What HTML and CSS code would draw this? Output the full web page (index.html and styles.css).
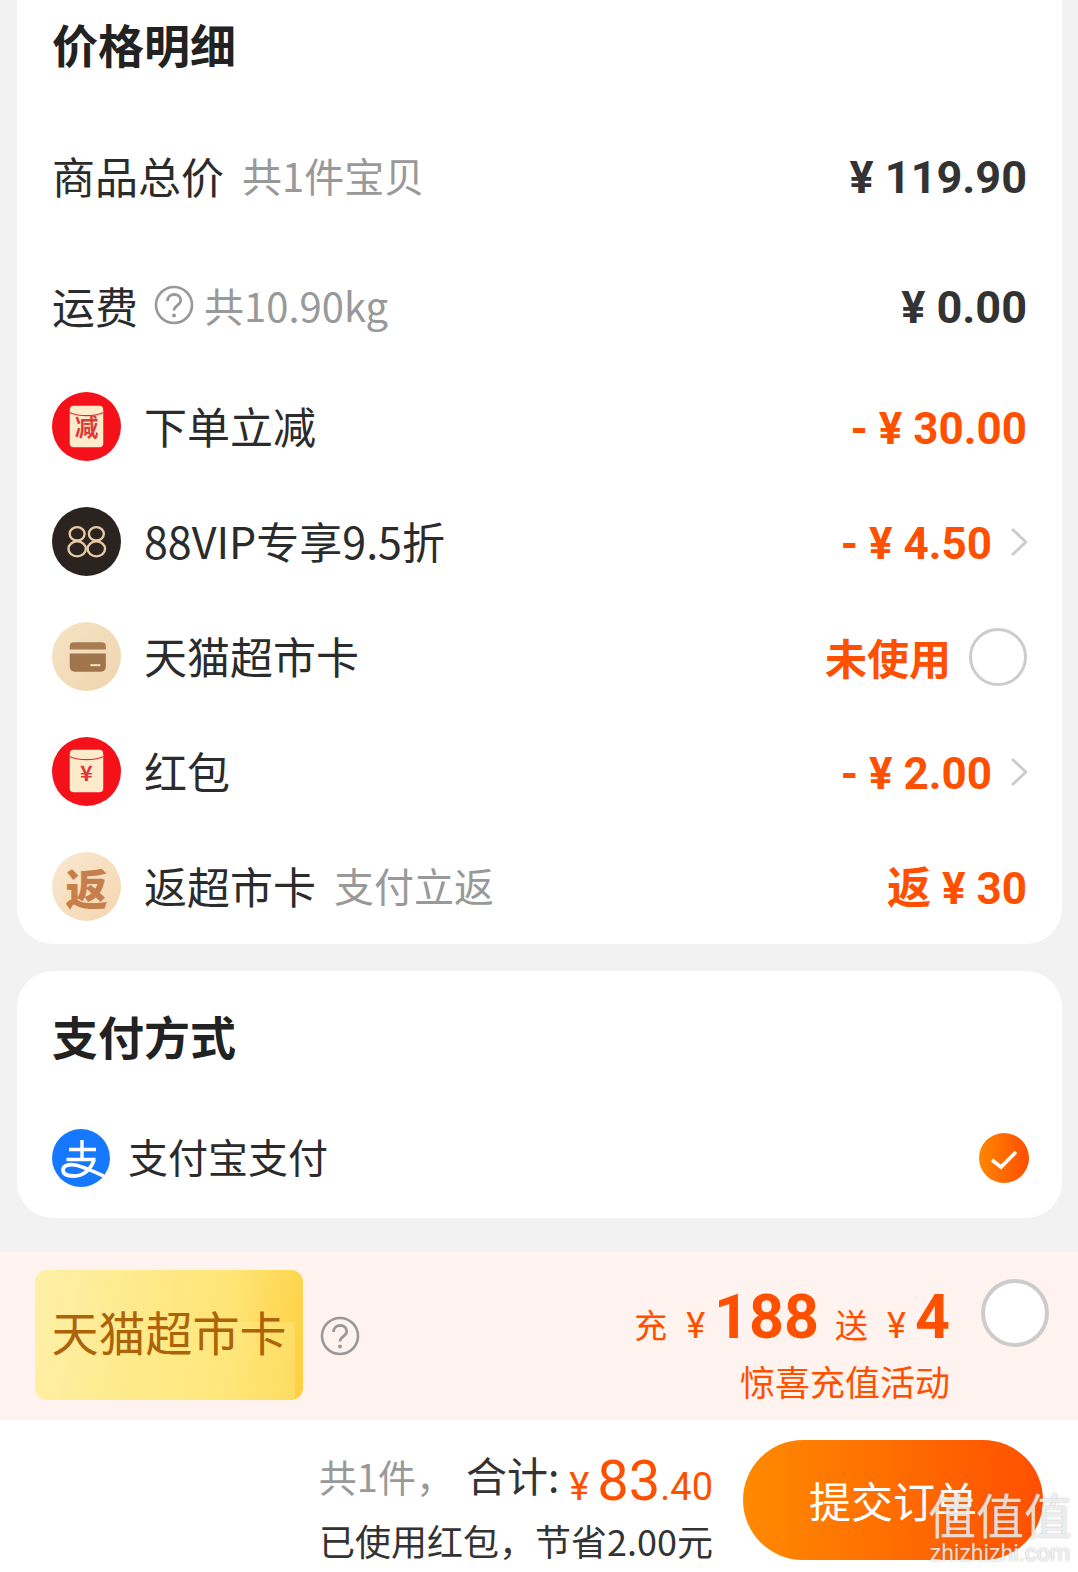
FILE: index.html
```html
<!DOCTYPE html>
<html lang="zh-CN">
<head>
    <meta charset="UTF-8" />
    <title>确认订单</title>
    <link rel="stylesheet" href="styles.css">
</head>
<body>
    <main class="page">
        <section class="card price-card">
            <h2 class="card-title price-title">价格明细</h2>
            <div class="row row-plain">
                <span class="label">商品总价</span>
                <span class="hint hint-gap">共1件宝贝</span>
                <span class="amount dark">¥ 119.90</span>
            </div>
            <div class="row row-plain row-second">
                <span class="label">运费</span>
                <svg class="help" viewBox="0 0 40 40">
                    <circle cx="20" cy="20" r="18" fill="none" stroke="#999" stroke-width="2.6"/>
                    <path d="M13.500 16c0-4 3-6.500 6.700-6.500s6.500 2.400 6.500 5.800c0 5-6.700 5.200-6.700 10.200" fill="none" stroke="#999" stroke-width="2.800"/>
                    <circle cx="20" cy="30.500" r="2" fill="#999"/>
                </svg>
                <span class="hint">共10.90kg</span>
                <span class="amount dark">¥ 0.00</span>
            </div>
            <div class="row">
                <svg class="row-icon" viewBox="0 0 70 70">
                    <circle cx="35" cy="35" r="35" fill="#f5111a"/>
                    <rect x="18" y="14" width="34" height="42" rx="4" fill="#fdebcb"/>
                    <path d="M18 21c10 4 24 4 34 0" fill="none" stroke="#e02a2a" stroke-width="1.200"/>
                    <text x="35" y="45" class="icon-char">减</text>
                </svg>
                <span class="label">下单立减</span>
                <span class="amount orange">- ¥ 30.00</span>
            </div>
            <div class="row">
                <svg class="row-icon" viewBox="0 0 70 70">
                    <circle cx="35" cy="35" r="35" fill="#2a2320"/>
                    <g fill="none" stroke="#e8cba5" stroke-width="2.400">
                        <ellipse cx="25.500" cy="27.200" rx="7.600" ry="6.800"/>
                        <ellipse cx="25.500" cy="42.500" rx="8.800" ry="7.600"/>
                        <ellipse cx="45" cy="27.200" rx="7.600" ry="6.800"/>
                        <ellipse cx="45" cy="42.500" rx="8.800" ry="7.600"/>
                    </g>
                </svg>
                <span class="label">88VIP专享9.5折</span>
                <span class="amount orange">- ¥ 4.50</span>
                <svg class="chevron" viewBox="0 0 18 30"><path d="M3 2l14 13L3 28" fill="none" stroke="#ccc" stroke-width="3"/></svg>
            </div>
            <div class="row">
                <svg class="row-icon" viewBox="0 0 70 70">
                    <defs>
                        <linearGradient id="beige" x1="0" y1="0" x2="1" y2="1">
                            <stop offset="0" stop-color="#f6e4c6"/>
                            <stop offset="1" stop-color="#efd4ac"/>
                        </linearGradient>
                    </defs>
                    <circle cx="35" cy="35" r="35" fill="url(#beige)"/>
                    <path d="M18 28v-3.500a4 4 0 0 1 4-4h28.600a4 4 0 0 1 4 4V28z" fill="#a87c52"/>
                    <path d="M18 32h36.600v13.500a5 5 0 0 1-5 5H23a5 5 0 0 1-5-5z" fill="#a0744c"/>
                    <rect x="39" y="42.800" width="10" height="2" fill="#f6e4c6"/>
                </svg>
                <span class="label">天猫超市卡</span>
                <span class="status">未使用</span>
                <span class="radio radio-small"></span>
            </div>
            <div class="row">
                <svg class="row-icon" viewBox="0 0 70 70">
                    <circle cx="35" cy="35" r="35" fill="#f5111a"/>
                    <rect x="18" y="13" width="34" height="43" rx="4" fill="#fdebcb"/>
                    <path d="M18 20c10 4 24 4 34 0" fill="none" stroke="#e02a2a" stroke-width="1.200"/>
                    <text x="35" y="45" class="icon-char icon-yen">¥</text>
                </svg>
                <span class="label">红包</span>
                <span class="amount orange">- ¥ 2.00</span>
                <svg class="chevron" viewBox="0 0 18 30"><path d="M3 2l14 13L3 28" fill="none" stroke="#ccc" stroke-width="3"/></svg>
            </div>
            <div class="row">
                <span class="fan-icon">返</span>
                <span class="label">返超市卡</span>
                <span class="hint hint-gap">支付立返</span>
                <span class="amount amount-fan orange">返 ¥ 30</span>
            </div>
        </section>

        <section class="card pay-card">
            <h2 class="card-title">支付方式</h2>
            <div class="pay-row">
                <svg class="alipay" viewBox="0 0 58 58">
                    <defs>
                        <clipPath id="payclip"><circle cx="29" cy="29" r="29"/></clipPath>
                    </defs>
                    <circle cx="29" cy="29" r="29" fill="#1677ff"/>
                    <g clip-path="url(#payclip)" fill="none" stroke="#fff">
                        <path d="M17 20.500h27M30 11v19M14.500 30.500h29" stroke-width="3.400"/>
                        <path d="M42 31C39 40 32 47 22 47c-7 0-11-2-11-6 0-5 7-6 12-5 10 2 22 8 35 14" stroke-width="3.800"/>
                    </g>
                </svg>
                <span class="label pay-label">支付宝支付</span>
                <svg class="check" viewBox="0 0 50 50">
                    <defs>
                        <linearGradient id="checkfill" x1="0" y1="0" x2="1" y2="0">
                            <stop offset="0" stop-color="#ff8500"/>
                            <stop offset="1" stop-color="#ff4f00"/>
                        </linearGradient>
                    </defs>
                    <circle cx="25" cy="25" r="25" fill="url(#checkfill)"/>
                    <path d="M13 27l9 7 15-15" fill="none" stroke="#fff" stroke-width="3.600"/>
                </svg>
            </div>
        </section>

        <section class="promo">
            <div class="promo-card">天猫超市卡</div>
            <svg class="help help-promo" viewBox="0 0 40 40">
                <circle cx="20" cy="20" r="18" fill="none" stroke="#999" stroke-width="2.600"/>
                <path d="M13.500 16c0-4 3-6.500 6.700-6.500s6.500 2.400 6.500 5.800c0 5-6.700 5.200-6.700 10.200" fill="none" stroke="#999" stroke-width="2.800"/>
                <circle cx="20" cy="30.500" r="2" fill="#999"/>
            </svg>
            <div class="promo-info">
                <div class="promo-line">
                    <span class="promo-small">充</span>
                    <span class="promo-yen">¥</span>
                    <span class="promo-num">188</span>
                    <span class="promo-small">送</span>
                    <span class="promo-yen">¥</span>
                    <span class="promo-num">4</span>
                </div>
                <div class="promo-note">惊喜充值活动</div>
            </div>
            <span class="radio radio-big"></span>
        </section>

        <footer class="bottom-bar">
            <div class="totals">
                <div class="total-line">
                    <div class="total-words">
                        <span class="total-count">共1件，</span>
                        <span class="total-label">合计:</span>
                    </div>
                    <div class="total-price">
                        <span class="total-yen">¥</span>
                        <span class="total-int">83</span>
                        <span class="total-dec">.40</span>
                    </div>
                </div>
                <div class="saved">已使用红包，节省2.00元</div>
            </div>
            <div class="submit">提交订单</div>
        </footer>
        <div class="watermark">
            <div class="wm-mark">值值值</div>
            <div class="wm-site">zhizhizhi.com</div>
        </div>
    </main>
</body>
</html>
```

FILE: styles.css
```css
* {
    box-sizing: border-box;
}
html, body {
    margin: 0;
    padding: 0;
}
body {
    width: 1078px;
    height: 1572px;
    overflow: hidden;
    background-color: #f2f2f3;
    font-family: "Noto Sans CJK SC", "Noto Sans", sans-serif;
    color: #333;
}
.page {
    position: relative;
    height: 1572px;
    display: flex;
    flex-direction: column;
}
.card {
    background-color: #fff;
    margin: 0 16px 0 17px;
    padding: 0 35px;
}
.price-card {
    height: 944px;
    border-radius: 0 0 36px 36px;
}
.pay-card {
    height: 247px;
    margin-top: 27px;
    padding-top: 19px;
    border-radius: 36px;
}
.card-title {
    margin: 0;
    font-size: 46px;
    font-weight: 700;
    line-height: 90px;
    color: #222;
}
.price-title {
    line-height: 86px;
    margin-bottom: 24px;
}
.row {
    display: flex;
    align-items: center;
    height: 115px;
}
.row-plain {
    height: 130px;
}
.row-second {
    margin-bottom: -1px;
}
.row-icon {
    width: 69px;
    height: 69px;
    margin-right: 23px;
    flex-shrink: 0;
}
.icon-char {
    font-size: 24px;
    font-weight: 700;
    fill: #e0383a;
    text-anchor: middle;
}
.icon-yen {
    font-size: 22px;
}
.fan-icon {
    width: 69px;
    height: 69px;
    margin-right: 23px;
    flex-shrink: 0;
    border-radius: 50%;
    background: linear-gradient(135deg, #f9e8d2, #f5d6ae);
    color: #c67f4a;
    font-size: 42px;
    font-weight: 900;
    line-height: 69px;
    text-align: center;
}
.label {
    font-size: 43px;
    line-height: 60px;
    margin-top: -4px;
    color: #2b2b2b;
}
.hint {
    font-size: 40px;
    line-height: 60px;
    margin-top: -4px;
    color: #999;
}
.row-plain .label,
.row-plain .hint {
    margin-top: 0;
}
.hint-gap {
    margin-left: 18px;
}
.help {
    width: 40px;
    height: 40px;
    margin: 0 10px 0 16px;
}
.amount {
    margin-left: auto;
    margin-top: 4px;
    font-family: "Roboto", "Noto Sans CJK SC", sans-serif;
    font-size: 44px;
    font-weight: 700;
    white-space: pre;
}
.amount-fan {
    margin-top: -4px;
}
.dark {
    font-size: 45px;
    color: #333;
}
.orange {
    color: #ff5000;
}
.chevron {
    width: 18px;
    height: 30px;
    margin-left: 17px;
}
.status {
    margin-left: auto;
    font-size: 42px;
    font-weight: 700;
    color: #ff5000;
}
.radio {
    display: block;
    border-radius: 50%;
    border: 3px solid #ccc;
    background-color: #fff;
    flex-shrink: 0;
}
.radio-small {
    width: 58px;
    height: 58px;
    margin-left: 18px;
}
.radio-big {
    width: 68px;
    height: 68px;
    margin: 27px 29px 0 31px;
    border-width: 4px;
}
.pay-row {
    display: flex;
    align-items: center;
    margin-top: 49px;
}
.alipay {
    width: 58px;
    height: 58px;
    margin-right: 18px;
}
.pay-label {
    font-size: 40px;
}
.check {
    width: 50px;
    height: 50px;
    margin-left: auto;
    margin-right: -2px;
}
.promo {
    display: flex;
    align-items: flex-start;
    margin-top: 34px;
    height: 168px;
    background-color: #fef3ef;
    padding-left: 35px;
}
.promo-card {
    width: 268px;
    height: 130px;
    margin-top: 18px;
    border-radius: 12px;
    background: linear-gradient(#ffec8a66, #ffec8a66) 80px 52px / 180px 78px no-repeat,
        linear-gradient(100deg, #fdf0a8 0%, #ffe474 70%, #fdcf40 100%);
    color: #ad6408;
    font-size: 47px;
    line-height: 122px;
    text-align: center;
}
.help-promo {
    margin: 64px 0 0 17px;
}
.promo-info {
    margin-left: auto;
    padding-top: 29px;
    text-align: right;
    color: #ff5000;
}
.promo-line {
    display: flex;
    align-items: baseline;
    justify-content: flex-end;
    height: 76px;
}
.promo-small {
    font-size: 33px;
    margin-left: 16px;
}
.promo-yen {
    font-family: "Roboto", sans-serif;
    font-size: 36px;
    margin: 0 9px 0 19px;
}
.promo-num {
    font-family: "Roboto", sans-serif;
    font-size: 61px;
    font-weight: 700;
}
.promo-note {
    font-size: 35px;
    line-height: 48px;
}
.bottom-bar {
    flex: 1;
    display: flex;
    align-items: flex-start;
    justify-content: flex-end;
    background-color: #fff;
    padding-top: 20px;
}
.totals {
    width: 400px;
    margin-right: 30px;
    text-align: right;
}
.total-line {
    display: flex;
    align-items: flex-start;
    justify-content: flex-end;
    height: 76px;
    white-space: nowrap;
}
.total-words {
    display: flex;
    align-items: baseline;
    line-height: 68px;
}
.total-price {
    display: flex;
    align-items: baseline;
    padding-top: 8px;
}
.total-count {
    font-size: 38px;
    color: #999;
    margin-right: 12px;
}
.total-label {
    font-size: 41px;
    color: #333;
}
.total-yen {
    font-size: 38px;
    color: #ff5000;
    margin: 0 8px 0 10px;
    font-family: "Roboto", sans-serif;
}
.total-int {
    font-family: "Roboto", sans-serif;
    font-size: 56px;
    color: #ff5000;
}
.total-dec {
    font-family: "Roboto", sans-serif;
    font-size: 38px;
    color: #ff5000;
}
.saved {
    font-size: 36px;
    line-height: 48px;
    color: #333;
}
.submit {
    width: 300px;
    height: 120px;
    margin-right: 35px;
    border-radius: 60px;
    background: linear-gradient(90deg, #ff8a00, #ff5000);
    color: #fff;
    font-size: 42px;
    line-height: 120px;
    text-align: center;
}
.watermark {
    position: absolute;
    right: 6px;
    bottom: 6px;
    color: rgba(255, 255, 255, 0.75);
    text-shadow: 0 0 2px rgba(120, 120, 120, 0.6);
    text-align: center;
}
.wm-mark {
    font-size: 48px;
    line-height: 58px;
}
.wm-site {
    font-family: "Roboto", sans-serif;
    font-size: 23px;
    line-height: 24px;
}
```
